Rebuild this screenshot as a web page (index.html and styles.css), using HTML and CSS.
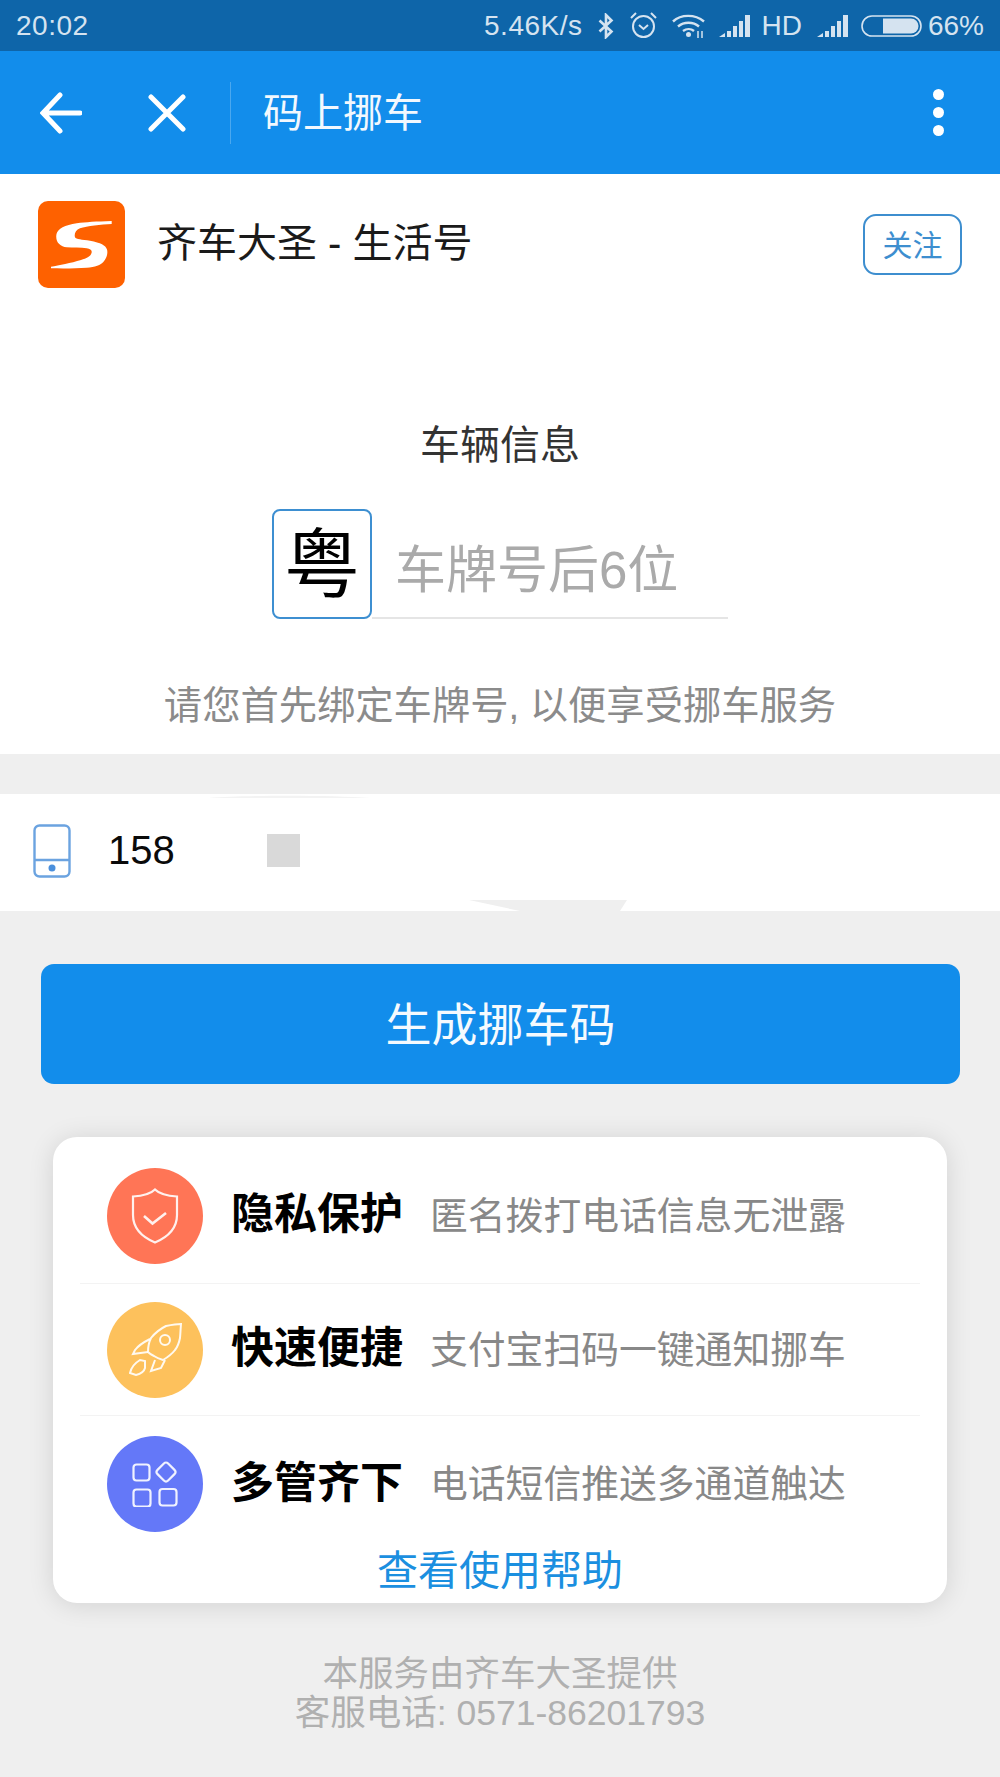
FILE: index.html
```html
<!DOCTYPE html>
<html lang="zh-CN">
<head>
<meta charset="utf-8">
<title>码上挪车</title>
<link rel="stylesheet" href="styles.css">
</head>
<body>
<div class="phone">
  <div class="status">
    <span class="time">20:02</span>
    <div class="status-right">
      <span>5.46K/s</span>
      <svg class="st-bt" width="18" height="26" viewBox="0 0 18 26"><path d="M2.500 7.500l12 11-5.500 5.500V2l5.500 5.500-12 11" fill="none" stroke="#d5e3f0" stroke-width="2.600"/></svg>
      <svg class="st-alarm" width="27" height="27" viewBox="0 0 27 27"><circle cx="13.500" cy="14.500" r="10.500" fill="none" stroke="#d5e3f0" stroke-width="2"/><path d="M9 13l4.500 4 4.500-4M1 6l5-5M26 6l-5-5" fill="none" stroke="#d5e3f0" stroke-width="2"/></svg>
      <svg class="st-wifi" width="33" height="25" viewBox="0 0 33 25"><path d="M1 8.500C9 1 23 1 32 8.500M6 13.500c6-5 15-5 21 0M11 18c3.500-2.500 8-2.500 11 0" fill="none" stroke="#d5e3f0" stroke-width="2.400"/><circle cx="16.500" cy="21.500" r="2.500" fill="#d5e3f0"/><path d="M26 18v7M30 18v7" stroke="#d5e3f0" stroke-width="1.500"/></svg>
      <svg class="st-sig" width="32" height="22" viewBox="0 0 32 22"><path d="M0 22l6-4v4zM8 16h4v6H8zM14 11h4v11h-4zM20 6h4v16h-4zM26 0h5v22h-5z" fill="#d5e3f0"/></svg>
      <span class="st-hd">HD</span>
      <svg class="st-sig2" width="32" height="22" viewBox="0 0 32 22"><path d="M0 22l6-4v4zM8 16h4v6H8zM14 11h4v11h-4zM20 6h4v16h-4zM26 0h5v22h-5z" fill="#d5e3f0"/></svg>
      <svg class="st-bat" width="61" height="22" viewBox="0 0 61 22"><rect x="1" y="1" width="59" height="20" rx="10" fill="none" stroke="#d5e3f0" stroke-width="1.600"/><path d="M22 3.500h28a7.500 7.500 0 0 1 0 15H22z" fill="#d5e3f0"/></svg>
      <span class="st-pct">66%</span>
    </div>
  </div>
  <nav class="nav">
    <svg class="nav-back" width="42" height="42" viewBox="0 0 42 42"><path d="M20 3L3 21l17 18M4 21h36" fill="none" stroke="#fff" stroke-width="5" stroke-linecap="round"/></svg>
    <svg class="nav-close" width="38" height="38" viewBox="0 0 38 38"><path d="M3 3l32 32M35 3L3 35" fill="none" stroke="#fff" stroke-width="5" stroke-linecap="round"/></svg>
    <span class="nav-sep"></span>
    <span class="nav-title">码上挪车</span>
    <span class="nav-more"><i></i><i></i><i></i></span>
  </nav>
  <header class="brand">
    <div class="logo">
      <svg width="61" height="49" viewBox="0 0 61 49"><path d="M60.700 1C45 1.500 35 2 25.700 3.300 14 5 6.500 9 5.500 14 4 22 9 26.500 15.700 27.300c6.300.7 14.300.2 20 1 3.300.7 5.300 1.700 5 4-.7 3.700-3.700 5.700-10.700 7.700C20 43 8 45.500 0 46.700v1.600c12 .2 25 .2 35.700-.6C44 47 50 45 52.300 42c3.700-4 4.700-9 3.700-12.500-1.500-4.500-6-6.500-17-8.800-8-1.200-14-1.200-15-3.400-1-3.300.5-7.300 5-9 7-2.300 21-3.800 31.700-4.300z" fill="#fff"/></svg>
    </div>
    <span class="brand-name">齐车大圣 - 生活号</span>
    <span class="follow">关注</span>
  </header>
  <section class="vehicle">
    <h1 class="vehicle-title">车辆信息</h1>
    <div class="plate">
      <span class="plate-prov">粤</span>
      <span class="plate-input">车牌号后6位</span>
    </div>
    <p class="hint">请您首先绑定车牌号, 以便享受挪车服务</p>
  </section>
  <section class="phone-row">
    <svg class="phone-glare" width="1000" height="117" viewBox="0 0 1000 117"><path d="M209 4c40-3 120-3 161 0z" fill="#f3f3f3"/><path d="M469 106h158l-7 11H520z" fill="#efefef"/></svg>
    <svg class="phone-icon" width="38" height="54" viewBox="0 0 38 54"><rect x="1.500" y="1.500" width="35" height="51" rx="5" fill="none" stroke="#6ba3e0" stroke-width="2.400"/><path d="M2 36h34" stroke="#6ba3e0" stroke-width="2.400"/><circle cx="19" cy="44" r="3.500" fill="#4a8fdc"/></svg>
    <span class="phone-num">158</span>
    <span class="mask"></span>
  </section>
  <div class="cta-wrap"><button class="cta"><span class="cta-label">生成挪车码</span></button></div>
  <section class="card">
    <div class="row row-first">
      <span class="badge badge-red">
        <svg width="48" height="56" viewBox="0 0 48 56"><path d="M24 1.500c4 4 13 6.500 22 7v18.500c0 13-9 22-22 27.500C11 49 2 40 2 27V8.500c9-.5 18-3 22-7z" fill="none" stroke="#fff" stroke-opacity=".9" stroke-width="2.200"/><path d="M13 28l8.500 7.500L35 25" fill="none" stroke="#fff" stroke-opacity=".9" stroke-width="2.600"/></svg>
      </span>
      <b class="row-title">隐私保护</b>
      <span class="row-desc">匿名拨打电话信息无泄露</span>
    </div>
    <div class="row">
      <span class="badge badge-yellow">
        <svg width="53" height="53" viewBox="0 0 53 53"><path d="M52 1c-.5 5-.500 9-1 14-1 5-2.500 9-5 12-3 4-7 7-12 10-3-1-6-2-9-4-2.500-1-4.500-2.500-6-4 0-5 1-10 3-14C26 10 31 6 37 3c5-1 10-2 15-2z" fill="none" stroke="#fff" stroke-opacity=".9" stroke-width="2"/><circle cx="36" cy="17" r="5" fill="none" stroke="#fff" stroke-opacity=".9" stroke-width="2"/><path d="M21 16c-6 3-12 7-15 11l-2 4 15-2M36 37l-4 8-10 3 4-11M11 37C6 40 2 45 1 50l6 2c4-1 8-3 9-7v-7z" fill="none" stroke="#fff" stroke-opacity=".9" stroke-width="2"/></svg>
      </span>
      <b class="row-title">快速便捷</b>
      <span class="row-desc">支付宝扫码一键通知挪车</span>
    </div>
    <div class="row row-last">
      <span class="badge badge-blue">
        <svg width="46" height="46" viewBox="0 0 46 46"><rect x="1.500" y="3.500" width="16" height="16" rx="3" fill="none" stroke="#fff" stroke-opacity=".9" stroke-width="2.200"/><rect x="1.500" y="28.500" width="17" height="17" rx="3" fill="none" stroke="#fff" stroke-opacity=".9" stroke-width="2.200"/><rect x="27.500" y="28" width="17" height="16.500" rx="3" fill="none" stroke="#fff" stroke-opacity=".9" stroke-width="2.200"/><rect x="26.500" y="3.500" width="15" height="15" rx="3" transform="rotate(45 34 11)" fill="none" stroke="#fff" stroke-opacity=".9" stroke-width="2.200"/></svg>
      </span>
      <b class="row-title">多管齐下</b>
      <span class="row-desc">电话短信推送多通道触达</span>
    </div>
    <a class="help">查看使用帮助</a>
  </section>
  <footer class="foot">
    <p>本服务由齐车大圣提供</p>
    <p>客服电话: 0571-86201793</p>
  </footer>
</div>
</body>
</html>
```
FILE: styles.css
```css
* { box-sizing: border-box; }
html, body { margin: 0; padding: 0; }
body {
  font-family: "Liberation Sans", "Noto Sans CJK SC", sans-serif;
  background: #efefef;
}
.phone { width: 1000px; height: 1777px; display: flex; flex-direction: column; overflow: hidden; }

.status {
  height: 51px; background: #0e65a9; color: #d5e3f0;
  display: flex; align-items: center; justify-content: space-between;
  padding: 0 16px; font-size: 28px; letter-spacing: .5px;
}
.status-right { display: flex; align-items: center; }
.st-bt { margin-left: 14px; }
.st-alarm { margin-left: 15px; }
.st-wifi { margin-left: 15px; }
.st-sig { margin-left: 14px; }
.st-hd { margin-left: 11px; letter-spacing: 0; }
.st-sig2 { margin-left: 15px; }
.st-bat { margin-left: 12px; }
.st-pct { margin-left: 6px; letter-spacing: 0; }

.nav {
  height: 123px; background: #128deb; display: flex; align-items: center;
  padding: 0 40px; position: relative;
}
.nav-close { margin-left: 66px; }
.nav-sep { width: 1px; height: 62px; background: #4aa8ef; margin-left: 44px; }
.nav-title { color: #f2f8fe; font-size: 40px; margin-left: 32px; padding-bottom: 5px; }
.nav-more { margin-left: auto; display: flex; flex-direction: column; gap: 7.300px; margin-right: 16px; }
.nav-more i { width: 11px; height: 11px; border-radius: 50%; background: #fff; display: block; }

.brand { background: #fff; display: flex; align-items: center; padding: 27px 38px 0; }
.logo {
  width: 87px; height: 87px; background: #fe6100; border-radius: 10px;
  display: flex; align-items: center; justify-content: center;
}
.brand-name { font-size: 40px; color: #1a1a1a; margin-left: 32px; padding-bottom: 10px; }
.follow {
  margin-left: auto; width: 99px; height: 61px; border: 2px solid #3d8ecf; border-radius: 13px;
  color: #3d8ecf; font-size: 30px; padding-bottom: 3px;
  display: flex; align-items: center; justify-content: center;
}

.vehicle { background: #fff; height: 466px; display: flex; flex-direction: column; align-items: center; padding-top: 132px; }
.vehicle-title { margin: 0; font-size: 40px; font-weight: 400; color: #333; line-height: 50px; }
.plate { display: flex; align-items: stretch; margin-top: 39px; height: 110px; width: 456px; }
.plate-prov {
  width: 100px; height: 110px; border: 2px solid #3d8fd1; border-radius: 8px;
  font-size: 76px; font-weight: 400; color: #000; padding-bottom: 10px;
  display: flex; align-items: center; justify-content: center; flex: none;
}
.plate-input {
  flex: 1; border-bottom: 2px solid #e5e5e5; color: #aaa; font-size: 51px;
  display: flex; align-items: center; padding-left: 23px; padding-top: 6px;
}
.hint { margin: 65px 0 0; font-size: 38.300px; color: #8b8b8b; line-height: 44px; white-space: nowrap; }

.phone-row {
  margin-top: 40px; height: 117px; background: #fff; display: flex; align-items: center; padding-left: 33px;
  position: relative;
}
.phone-glare { position: absolute; left: 0; top: 0; }
.phone-icon { position: relative; margin-bottom: 3px; }
.phone-num { font-size: 40px; color: #0a0a0a; margin-left: 37px; width: 71px; white-space: nowrap; position: relative; padding-bottom: 4px; }
.mask { width: 33px; height: 33px; background: #d9d9d9; margin-left: 88px; margin-bottom: 5px; position: relative; }

.cta-wrap { padding: 53px 41px 0; }
.cta {
  display: block; width: 919px; height: 120px; border: 0; border-radius: 13px; background: #128deb;
  color: #f5fafe; font-size: 46px; font-family: inherit; padding: 0 0 6px;
}

.card {
  margin: 53px 53px 0; height: 466px; background: #fff; border-radius: 24px;
  box-shadow: 0 2px 26px rgba(0,0,0,.12);
  padding: 0 27px; display: flex; flex-direction: column;
}
.row {
  height: 132px; display: flex; align-items: center; padding-left: 27px;
  border-bottom: 1px solid #f3f3f3; flex: none;
}
.row-first { height: 147px; padding-top: 11px; }
.row-last { height: 136px; border-bottom: 0; }
.badge {
  width: 96px; height: 96px; border-radius: 50%; flex: none;
  display: flex; align-items: center; justify-content: center;
}
.badge-red { background: #ff7556; }
.badge-yellow { background: #fdc15c; }
.badge-blue { background: #6478f8; }
.row-title { font-size: 43px; font-weight: 700; color: #000; margin-left: 28px; white-space: nowrap; padding-bottom: 11px; }
.row-desc { font-size: 37.800px; color: #888; margin-left: 27px; white-space: nowrap; padding-bottom: 7px; }
.help { text-align: center; font-size: 41px; line-height: 38px; color: #1b8fe0; }

.foot { margin-top: 52px; text-align: center; color: #b0b0b0; font-size: 35.500px; line-height: 39px; }
.foot p { margin: 0; }
```
